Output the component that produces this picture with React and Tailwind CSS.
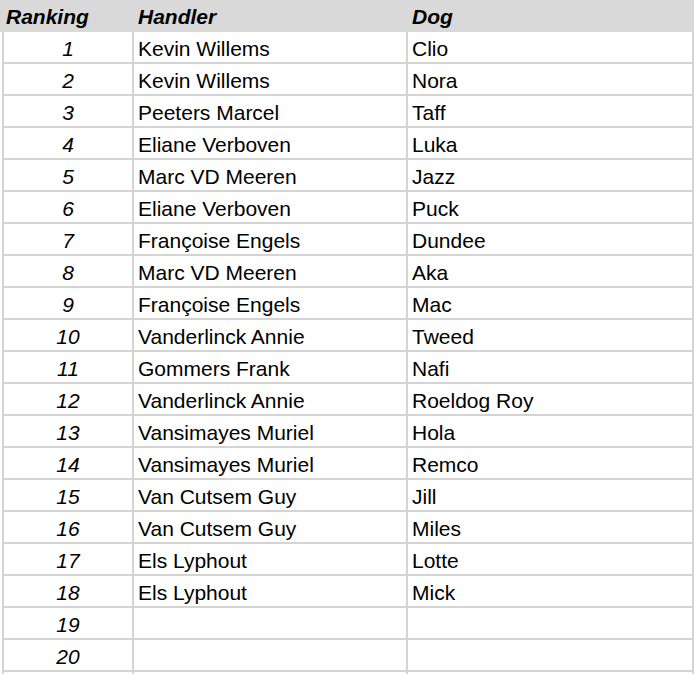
import React from 'react';

const rows = [
    ['Kevin Willems', 'Clio'],
    ['Kevin Willems', 'Nora'],
    ['Peeters Marcel', 'Taff'],
    ['Eliane Verboven', 'Luka'],
    ['Marc VD Meeren', 'Jazz'],
    ['Eliane Verboven', 'Puck'],
    ['Françoise Engels', 'Dundee'],
    ['Marc VD Meeren', 'Aka'],
    ['Françoise Engels', 'Mac'],
    ['Vanderlinck Annie', 'Tweed'],
    ['Gommers Frank', 'Nafi'],
    ['Vanderlinck Annie', 'Roeldog Roy'],
    ['Vansimayes Muriel', 'Hola'],
    ['Vansimayes Muriel', 'Remco'],
    ['Van Cutsem Guy', 'Jill'],
    ['Van Cutsem Guy', 'Miles'],
    ['Els Lyphout', 'Lotte'],
    ['Els Lyphout', 'Mick'],
    ['', ''],
    ['', ''],
    [null, null],
];

export default function App() {
    return (
        <div className="w-[694px] h-[674px] overflow-hidden bg-white text-black text-[21px] font-['Liberation_Sans',Arial,sans-serif]">
            <div className="flex h-[32px] bg-[#d9d9d9] font-bold italic leading-[24px]">
                <div className="w-[134px] pl-[6px] pt-[5px]">Ranking</div>
                <div className="w-[274px] pl-[4px] pt-[5px]">Handler</div>
                <div className="w-[286px] pl-[4px] pt-[5px]">Dog</div>
            </div>

            {rows.map(([handler, dog], i) => (
                <div key={i} className="flex h-[32px] pl-[2px] leading-[24px]">
                    <div className="w-[132px] border-l-2 border-r-2 border-b-2 border-[#d4d4d4] pt-[5px] text-center italic">
                        {handler === null ? '' : i + 1}
                    </div>
                    <div className="w-[274px] border-r-2 border-b-2 border-[#d4d4d4] pl-[4px] pt-[5px] whitespace-nowrap">
                        {handler}
                    </div>
                    <div className="w-[286px] border-r-2 border-b-2 border-[#d4d4d4] pl-[4px] pt-[5px] whitespace-nowrap">
                        {dog}
                    </div>
                </div>
            ))}
        </div>
    );
}
